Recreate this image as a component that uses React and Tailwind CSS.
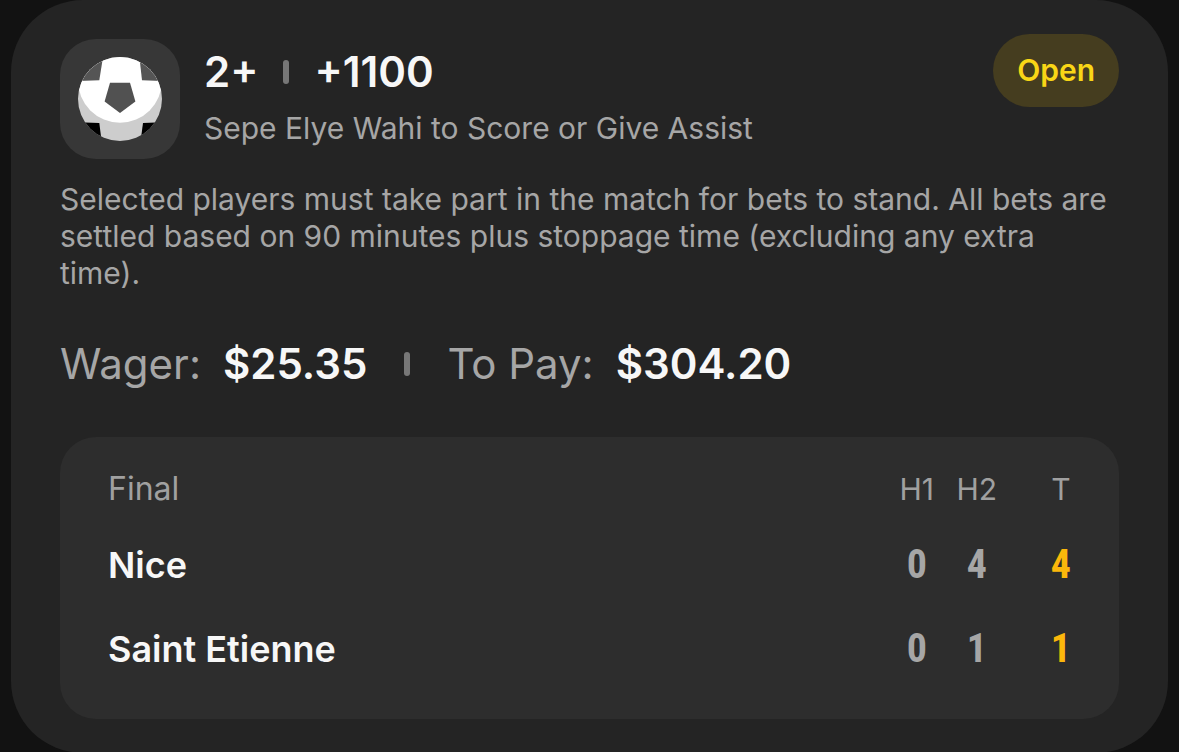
const SCORES = [
  { team: "Nice", h1: 0, h2: 4, total: 4 },
  { team: "Saint Etienne", h1: 0, h2: 1, total: 1 },
];

function SoccerBall() {
  return (
    <svg viewBox="0 0 84 84" className="w-[84px] h-[84px]" aria-hidden="true">
      <defs>
        <clipPath id="ball">
          <circle cx="42" cy="42" r="42" />
        </clipPath>
      </defs>
      <g clipPath="url(#ball)">
        <rect width="84" height="84" fill="#cdcdcd" />
        <circle cx="42" cy="23.7" r="42" fill="#ffffff" />
        <path d="M25 0 L21.3 23.3 L0 24 V0 Z" fill="#555555" />
        <path d="M61.4 0 L64 23.3 L84 24 V0 Z" fill="#555555" />
        <path d="M32 25.7 H52 L57.4 44.4 L42 56 L26.6 44.4 Z" fill="#515151" />
        <path d="M0 65.3 L21.3 66 L23.6 84 H0 Z" fill="#000000" />
        <path d="M84 65.3 L65 66 L62.6 84 H84 Z" fill="#000000" />
      </g>
    </svg>
  );
}

function Separator() {
  return <span className="block w-1.5 h-6 rounded-full bg-[#777777]" />;
}

export default function App() {
  return (
    <main className="min-h-screen bg-[#121212] px-[11px] font-['Inter',sans-serif]">
      <article className="bg-[#242424] rounded-[72px] px-[49px] py-[34px]">
        <header className="flex items-start">
          <div className="flex items-center justify-center w-[120px] h-[120px] mt-[5px] shrink-0 rounded-[36px] bg-[#373737]">
            <SoccerBall />
          </div>
          <div className="flex-1 ml-6 mt-3">
            <h1 className="flex items-center gap-[25px] text-[42px] leading-[52px] font-semibold text-[#f7f7f7]">
              <span>2+</span>
              <Separator />
              <span>+1100</span>
            </h1>
            <p className="mt-3 text-[30px] leading-9 text-[#a6a6a6]">
              Sepe Elye Wahi to Score or Give Assist
            </p>
          </div>
          <span className="px-6 rounded-full bg-[#453d1f] text-[30px] leading-[73px] font-semibold text-[#f9d616]">
            Open
          </span>
        </header>

        <p className="mt-[22px] text-[30px] leading-[37px] text-[#a6a6a6]">
          Selected players must take part in the match for bets to stand. All
          bets are settled based on 90 minutes plus stoppage time (excluding any
          extra time).
        </p>

        <div className="flex items-center gap-[37px] mt-[46px] text-[42px] leading-[52px] text-[#a6a6a6]">
          <p className="flex gap-[22px]">
            Wager:
            <strong className="font-semibold text-[#f7f7f7]">$25.35</strong>
          </p>
          <Separator />
          <p className="flex gap-[22px]">
            To Pay:
            <strong className="font-semibold text-[#f7f7f7]">$304.20</strong>
          </p>
        </div>

        <section className="mt-[47px] pt-[18px] pb-7 px-12 rounded-[36px] bg-[#2d2d2d]">
          <table className="w-full">
            <thead>
              <tr className="h-[68px] text-[32px] leading-9 text-[#a0a0a0]">
                <th className="text-left font-normal">Final</th>
                <th className="w-[60px] text-center text-[30px] font-normal">H1</th>
                <th className="w-[60px] text-center text-[30px] font-normal">H2</th>
                <th className="w-16 pl-11 text-center text-[30px] font-normal">T</th>
              </tr>
            </thead>
            <tbody>
              {SCORES.map((row) => (
                <tr
                  key={row.team}
                  className="h-[84px] font-['Roboto_Condensed','Liberation_Sans_Narrow',Roboto,sans-serif] text-[40px] leading-[48px] font-bold text-[#a6a6a6]"
                >
                  <th className="text-left font-['Inter',sans-serif] text-[36px] font-semibold text-[#f7f7f7]">
                    {row.team}
                  </th>
                  <td className="text-center">{row.h1}</td>
                  <td className="text-center">{row.h2}</td>
                  <td className="pl-11 text-center text-[#fbb70b]">{row.total}</td>
                </tr>
              ))}
            </tbody>
          </table>
        </section>
      </article>
    </main>
  );
}
